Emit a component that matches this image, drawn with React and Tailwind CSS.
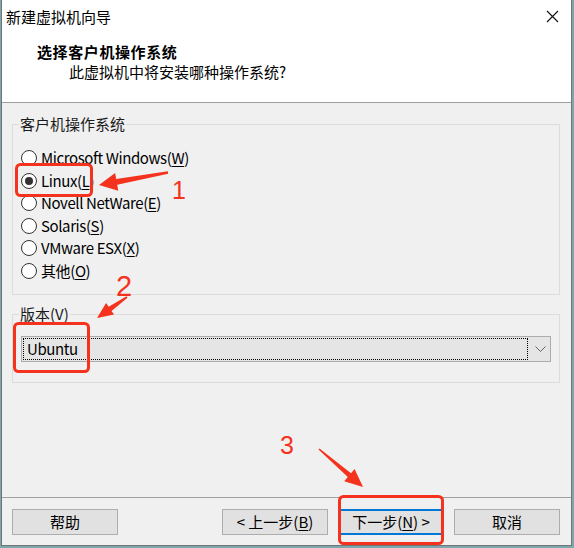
import React from "react";

const osList = [
  { label: "Microsoft Windows", key: "W" },
  { label: "Linux", key: "L", checked: true },
  { label: "Novell NetWare", key: "E" },
  { label: "Solaris", key: "S" },
  { label: "VMware ESX", key: "X" },
  { label: "其他", key: "O" },
];

function Radio({ label, hotkey, checked }) {
  return (
    <div className="flex items-center h-[22.6px]">
      <span className="ml-[2px] w-[16px] h-[16px] rounded-full border border-[#333333] bg-white flex items-center justify-center">
        {checked && <span className="w-[8px] h-[8px] rounded-full bg-[#333333]"></span>}
      </span>
      <span className="ml-[4px] leading-[20px] tracking-[-0.4px]">
        {label}(<u className="underline-offset-2">{hotkey}</u>)
      </span>
    </div>
  );
}

function Button({ children, primary }) {
  return (
    <button
      className={
        "w-[106px] h-[26px] flex items-center justify-center bg-[#e1e1e1] text-[15px] leading-[20px] " +
        (primary ? "border-2 border-[#0078d7]" : "border border-[#adadad]")
      }
    >
      {children}
    </button>
  );
}

export default function App() {
  const red = "#f5321e";
  return (
    <div className="relative w-[574px] h-[548px] bg-[#7ba7ae] font-['Noto_Sans_CJK_SC','Noto_Sans',sans-serif] text-black text-[15px] overflow-hidden">
      {/* window */}
      <div className="ml-[1px] w-[571px] h-[546px] flex flex-col border-l border-r border-b border-[#747474] bg-[#f0f0f0]">
        {/* header */}
        <div className="h-[103px] bg-white border-b border-[#a0a0a0] shrink-0">
          <div className="h-[33px] flex items-center justify-between pl-[4px] pr-[12px]">
            <span className="leading-[20px]">新建虚拟机向导</span>
            <svg width="13" height="13" viewBox="0 0 13 13">
              <path d="M1 1 L12 12 M12 1 L1 12" stroke="#111" strokeWidth="1.1" fill="none" />
            </svg>
          </div>
          <div className="mt-[9px] pl-[35px] leading-[20px] font-bold tracking-[0.6px]">选择客户机操作系统</div>
          <div className="pl-[67px] leading-[20px]">此虚拟机中将安装哪种操作系统?</div>
        </div>

        {/* body */}
        <div className="flex-1 flex flex-col">
          <fieldset className="mt-[11px] ml-[10px] w-[548px] h-[181px] border border-[#dcdcdc] pl-[6px]">
            <legend className="px-[1px] leading-[20px] text-[#1a1a1a]">客户机操作系统</legend>
            <div className="mt-[12.7px] flex flex-col">
              {osList.map((os) => (
                <Radio key={os.key} label={os.label} hotkey={os.key} checked={os.checked} />
              ))}
            </div>
          </fieldset>

          <fieldset className="mt-[9px] ml-[10px] w-[548px] h-[79px] border border-[#dcdcdc] pl-[6px]">
            <legend className="px-[1px] leading-[20px] text-[#1a1a1a]">
              版本(<u className="underline-offset-2">V</u>)
            </legend>
            <div className="mt-[12px] ml-[2px] w-[530px] h-[26px] flex items-center bg-[#e5e5e5] border border-[#acacac] pl-[1px] pr-[4px]">
              <div className="w-[505px] h-[22px] border border-dotted border-black flex items-center pl-[3px] leading-[20px] tracking-[-0.4px]">
                Ubuntu
              </div>
              <div className="flex-1 flex justify-end">
                <svg width="11" height="7" viewBox="0 0 11 7">
                  <path d="M0.5 0.5 L5.5 5.5 L10.5 0.5" stroke="#606060" strokeWidth="1" fill="none" />
                </svg>
              </div>
            </div>
          </fieldset>
        </div>

        {/* footer */}
        <div className="h-[48px] shrink-0 border-t border-[#a0a0a0] pt-[11px] flex">
          <div className="ml-[10px]">
            <Button>帮助</Button>
          </div>
          <div className="ml-[104px] flex gap-[10px]">
            <Button>
              &lt; 上一步(<u className="underline-offset-2">B</u>)
            </Button>
            <Button primary>
              下一步(<u className="underline-offset-2">N</u>) &gt;
            </Button>
            <Button>取消</Button>
          </div>
        </div>
      </div>

      {/* annotations drawn over the screenshot */}
      <svg className="absolute inset-0 pointer-events-none" width="574" height="548" viewBox="0 0 574 548">
        <rect x="16.5" y="164.5" width="75" height="31" rx="4" fill="none" stroke={red} strokeWidth="3" />
        <polygon
          points="99,185 115.1,172.9 116.2,178.9 167.8,171.3 168.2,173.7 117.2,184.7 118.3,190.7"
          fill={red}
        />
        <text x="172" y="199" fontSize="25" fill={red} fontFamily="Liberation Sans, sans-serif">1</text>

        <text x="116" y="296" fontSize="29" fill={red} fontFamily="Liberation Sans, sans-serif">2</text>
        <polygon
          points="97,318 106.1,303.1 108.7,306.8 126.5,296.3 127.5,297.7 111.5,310.9 114.1,314.5"
          fill={red}
        />
        <rect x="14.5" y="323.5" width="74" height="48" rx="4" fill="none" stroke={red} strokeWidth="3" />

        <text x="280" y="454" fontSize="25" fill={red} fontFamily="Liberation Sans, sans-serif">3</text>
        <polygon
          points="363,487 344.2,481.3 347.8,477.1 318.5,449.6 319.5,448.4 351,473.3 354.6,469.1"
          fill={red}
        />
        <rect x="339.5" y="496.5" width="103" height="47" rx="4" fill="none" stroke={red} strokeWidth="3" />
      </svg>
    </div>
  );
}
